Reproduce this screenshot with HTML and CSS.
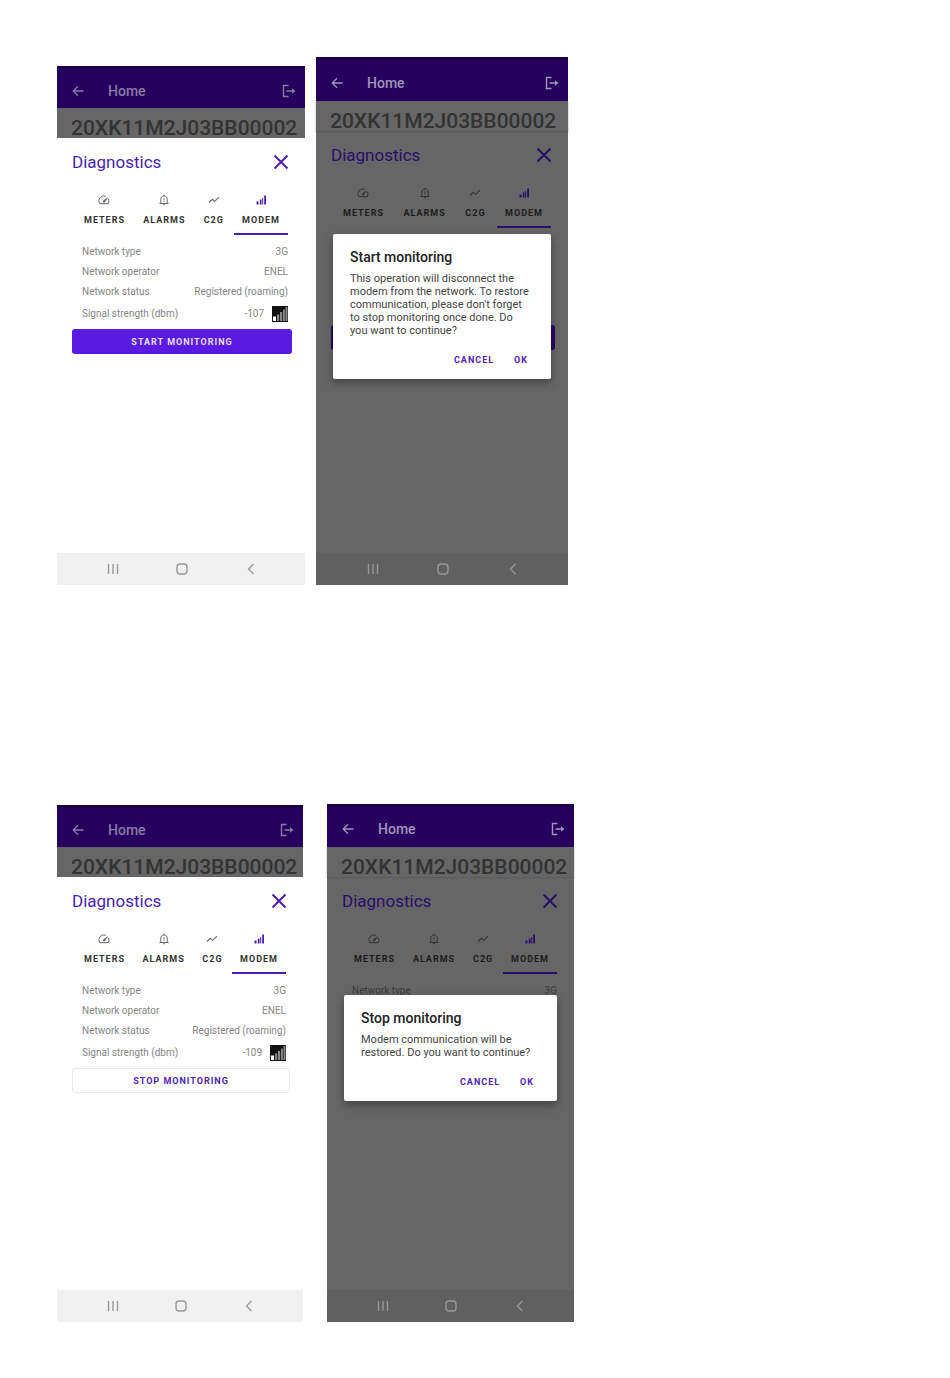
FILE: index.html
```html
<!DOCTYPE html>
<html lang="en">
<head>
<meta charset="utf-8">
<title>Modem diagnostics</title>
<link rel="stylesheet" href="styles.css">
</head>
<body>
<svg class="defs" aria-hidden="true">
  <symbol id="back" viewBox="0 0 12 12"><path d="M11.500 6H1.500M6 1.200L1.200 6L6 10.800" fill="none" stroke="currentColor" stroke-width="1.300"/></symbol>
  <symbol id="exit" viewBox="0 0 14 14"><path d="M6.500 1.500H1.500V12.500H6.500M4.500 7H12" fill="none" stroke="currentColor" stroke-width="1.4"/><path d="M10 4.200L13.500 7L10 9.800Z" fill="currentColor"/></symbol>
  <symbol id="close" viewBox="0 0 16 16"><path d="M1.500 1.500L14.500 14.500M14.500 1.500L1.500 14.500" fill="none" stroke="currentColor" stroke-width="2"/></symbol>
  <symbol id="gauge" viewBox="0 0 12 12"><path d="M7.800 2.300A5 5 0 0 0 1.700 9.700H10.300A5 5 0 0 0 10.400 4.800" fill="none" stroke="currentColor" stroke-width="1"/><path d="M10.300 2.700L7 8A1.100 1.100 0 0 1 5.200 6.500Z" fill="currentColor"/></symbol>
  <symbol id="bell" viewBox="0 0 12 12"><path d="M1.500 9.500H10.500M2.800 9.500V5.200C2.800 3.200 4 2 6 2S9.200 3.200 9.200 5.200V9.500M6 2V.7M6 4.200V6.500M6 7.300V8.200" fill="none" stroke="currentColor" stroke-width="1"/><path d="M4.900 10.300H7.100A1.100 1.100 0 0 1 4.900 10.300Z" fill="currentColor"/></symbol>
  <symbol id="trend" viewBox="0 0 12 12"><path d="M1 8.500L4.400 5.300L6.600 7.300L11 3.200" fill="none" stroke="currentColor" stroke-width="1.100"/></symbol>
  <symbol id="bars" viewBox="0 0 12 12"><path d="M1.500 7.500H3.500V10.500H1.500ZM4.800 5.500H6.500V10.500H4.800ZM7.200 4H8.200V10.500H7.200ZM9.200 1.500H11V10.500H9.200Z" fill="currentColor"/></symbol>
  <symbol id="signal" viewBox="0 0 16 16"><path d="M0 0H16V16H0Z" fill="#111"/><path d="M1 10.500H4V15H1Z" fill="#fff"/><path d="M5 8.500H7.200V15H5ZM8 6H10.200V15H8ZM11 3.500H12.900V15H11ZM13.500 1H15.500V15H13.500Z" fill="#888"/></symbol>
  <symbol id="recents" viewBox="0 0 14 14"><path d="M2.500 2V12M7 2V12M11.500 2V12" stroke="currentColor" stroke-width="1.400"/></symbol>
  <symbol id="homekey" viewBox="0 0 14 14"><rect x="2" y="2" width="10" height="10" rx="3" fill="none" stroke="currentColor" stroke-width="1.400"/></symbol>
  <symbol id="backkey" viewBox="0 0 14 14"><path d="M9.500 2L4.500 7L9.500 12" fill="none" stroke="currentColor" stroke-width="1.400"/></symbol>
</svg>
<main class="page">
  <div class="row">
    <section class="phone medium">
      <header class="appbar"><button class="icon-btn" aria-label="Back"><svg class="i12"><use href="#back"/></svg></button><span class="appbar-title">Home</span><button class="icon-btn" aria-label="Log out"><svg class="i14"><use href="#exit"/></svg></button></header>
      <div class="serial">20XK11M2J03BB00002</div>
      <div class="sheet">
        <div class="sheet-head"><h2>Diagnostics</h2><button class="icon-btn" aria-label="Close"><svg class="i16"><use href="#close"/></svg></button></div>
        <div class="tabs" role="tablist">
          <button class="tab" role="tab"><svg class="i12"><use href="#gauge"/></svg>METERS</button>
          <button class="tab" role="tab"><svg class="i12"><use href="#bell"/></svg>ALARMS</button>
          <button class="tab" role="tab"><svg class="i12"><use href="#trend"/></svg>C2G</button>
          <button class="tab active" role="tab" aria-selected="true"><svg class="i12"><use href="#bars"/></svg>MODEM</button>
        </div>
        <dl class="facts">
          <div><dt>Network type</dt><dd>3G</dd></div>
          <div><dt>Network operator</dt><dd>ENEL</dd></div>
          <div><dt>Network status</dt><dd>Registered (roaming)</dd></div>
          <div class="strength"><dt>Signal strength (dbm)</dt><dd>-107<svg class="i16"><use href="#signal"/></svg></dd></div>
        </dl>
        <button class="action">START MONITORING</button>
      </div>
      <nav class="keys"><button class="icon-btn" aria-label="Recents"><svg class="i14"><use href="#recents"/></svg></button><button class="icon-btn" aria-label="Home"><svg class="i14"><use href="#homekey"/></svg></button><button class="icon-btn" aria-label="Back"><svg class="i14"><use href="#backkey"/></svg></button></nav>
    </section>

    <section class="phone dimmed tall">
      <header class="appbar"><button class="icon-btn" aria-label="Back"><svg class="i12"><use href="#back"/></svg></button><span class="appbar-title">Home</span><button class="icon-btn" aria-label="Log out"><svg class="i14"><use href="#exit"/></svg></button></header>
      <div class="serial">20XK11M2J03BB00002</div>
      <div class="sheet">
        <div class="sheet-head"><h2>Diagnostics</h2><button class="icon-btn" aria-label="Close"><svg class="i16"><use href="#close"/></svg></button></div>
        <div class="tabs" role="tablist">
          <button class="tab" role="tab"><svg class="i12"><use href="#gauge"/></svg>METERS</button>
          <button class="tab" role="tab"><svg class="i12"><use href="#bell"/></svg>ALARMS</button>
          <button class="tab" role="tab"><svg class="i12"><use href="#trend"/></svg>C2G</button>
          <button class="tab active" role="tab" aria-selected="true"><svg class="i12"><use href="#bars"/></svg>MODEM</button>
        </div>
        <div class="facts covered"></div>
        <div class="action"></div>
      </div>
      <nav class="keys"><button class="icon-btn" aria-label="Recents"><svg class="i14"><use href="#recents"/></svg></button><button class="icon-btn" aria-label="Home"><svg class="i14"><use href="#homekey"/></svg></button><button class="icon-btn" aria-label="Back"><svg class="i14"><use href="#backkey"/></svg></button></nav>
      <div class="overlay">
        <div class="dialog" role="dialog" aria-labelledby="start-title">
          <h3 id="start-title">Start monitoring</h3>
          <p>This operation will disconnect the modem from the network. To restore communication, please don't forget to stop monitoring once done. Do you want to continue?</p>
          <div class="choices"><button>CANCEL</button><button>OK</button></div>
        </div>
      </div>
    </section>
  </div>

  <div class="row spaced">
    <section class="phone small">
      <header class="appbar"><button class="icon-btn" aria-label="Back"><svg class="i12"><use href="#back"/></svg></button><span class="appbar-title">Home</span><button class="icon-btn" aria-label="Log out"><svg class="i14"><use href="#exit"/></svg></button></header>
      <div class="serial">20XK11M2J03BB00002</div>
      <div class="sheet">
        <div class="sheet-head"><h2>Diagnostics</h2><button class="icon-btn" aria-label="Close"><svg class="i16"><use href="#close"/></svg></button></div>
        <div class="tabs" role="tablist">
          <button class="tab" role="tab"><svg class="i12"><use href="#gauge"/></svg>METERS</button>
          <button class="tab" role="tab"><svg class="i12"><use href="#bell"/></svg>ALARMS</button>
          <button class="tab" role="tab"><svg class="i12"><use href="#trend"/></svg>C2G</button>
          <button class="tab active" role="tab" aria-selected="true"><svg class="i12"><use href="#bars"/></svg>MODEM</button>
        </div>
        <dl class="facts">
          <div><dt>Network type</dt><dd>3G</dd></div>
          <div><dt>Network operator</dt><dd>ENEL</dd></div>
          <div><dt>Network status</dt><dd>Registered (roaming)</dd></div>
          <div class="strength"><dt>Signal strength (dbm)</dt><dd>-109<svg class="i16"><use href="#signal"/></svg></dd></div>
        </dl>
        <button class="action outlined">STOP MONITORING</button>
      </div>
      <nav class="keys"><button class="icon-btn" aria-label="Recents"><svg class="i14"><use href="#recents"/></svg></button><button class="icon-btn" aria-label="Home"><svg class="i14"><use href="#homekey"/></svg></button><button class="icon-btn" aria-label="Back"><svg class="i14"><use href="#backkey"/></svg></button></nav>
    </section>

    <section class="phone dimmed">
      <header class="appbar"><button class="icon-btn" aria-label="Back"><svg class="i12"><use href="#back"/></svg></button><span class="appbar-title">Home</span><button class="icon-btn" aria-label="Log out"><svg class="i14"><use href="#exit"/></svg></button></header>
      <div class="serial">20XK11M2J03BB00002</div>
      <div class="sheet">
        <div class="sheet-head"><h2>Diagnostics</h2><button class="icon-btn" aria-label="Close"><svg class="i16"><use href="#close"/></svg></button></div>
        <div class="tabs" role="tablist">
          <button class="tab" role="tab"><svg class="i12"><use href="#gauge"/></svg>METERS</button>
          <button class="tab" role="tab"><svg class="i12"><use href="#bell"/></svg>ALARMS</button>
          <button class="tab" role="tab"><svg class="i12"><use href="#trend"/></svg>C2G</button>
          <button class="tab active" role="tab" aria-selected="true"><svg class="i12"><use href="#bars"/></svg>MODEM</button>
        </div>
        <dl class="facts">
          <div><dt>Network type</dt><dd>3G</dd></div>
        </dl>
      </div>
      <nav class="keys"><button class="icon-btn" aria-label="Recents"><svg class="i14"><use href="#recents"/></svg></button><button class="icon-btn" aria-label="Home"><svg class="i14"><use href="#homekey"/></svg></button><button class="icon-btn" aria-label="Back"><svg class="i14"><use href="#backkey"/></svg></button></nav>
      <div class="overlay">
        <div class="dialog" role="dialog" aria-labelledby="stop-title">
          <h3 id="stop-title">Stop monitoring</h3>
          <p>Modem communication will be restored. Do you want to continue?</p>
          <div class="choices"><button>CANCEL</button><button>OK</button></div>
        </div>
      </div>
    </section>
  </div>
</main>
</body>
</html>
```

FILE: styles.css
```css
* { box-sizing: border-box; }
body { margin: 0; background: #fff; font-family: Roboto, "Liberation Sans", sans-serif; }
button { font: inherit; letter-spacing: inherit; color: inherit; background: none; border: 0; padding: 0; cursor: pointer; }
h2, h3, p, dl, dd { margin: 0; }
svg { display: block; flex: none; }
.defs { position: absolute; width: 0; height: 0; }
.i12 { width: 12px; height: 12px; }
.i14 { width: 14px; height: 14px; }
.i16 { width: 16px; height: 16px; }

.page { display: flex; flex-direction: column; gap: 219px; padding: 57px; }
.row { display: flex; align-items: flex-end; gap: 11px; }
.row.spaced { gap: 24px; }

.phone {
  --sheet: #fff;
  --accent: #4a1fb0;
  --label: #333;
  --icon: #666;
  --text: #858585;
  --serial: #333;
  --fill: #5a1be0;
  --nav: #f1f1f1;
  --key: #999;
  --bar-text: #8a7aa6;
  --bar-height: 43px;
  position: relative;
  display: flex;
  flex-direction: column;
  flex: 0 1 247px;
  min-height: 518px;
  background: var(--sheet);
}
.phone.dimmed {
  --sheet: #666;
  --accent: #280f6c;
  --label: #1c1c1c;
  --icon: #333;
  --text: #3a3a3a;
  --fill: #25085f;
  --nav: #606060;
  --key: #989898;
  --bar-text: #a195b5;
}
.phone.small { --bar-height: 42px; flex-basis: 246px; min-height: 517px; }
.phone.medium { --bar-height: 42px; flex-basis: 248px; min-height: 519px; }
.phone.tall { --bar-height: 44px; flex-basis: 252px; min-height: 528px; }

.appbar {
  display: flex;
  align-items: center;
  height: var(--bar-height);
  padding: 4px 9px 0 15px;
  border-top: 3px solid #1b0047;
  background: #26005e;
  color: var(--bar-text);
}
.appbar-title { flex: 1; padding-left: 24px; font-size: 14px; line-height: 18px; font-weight: 500; }

.serial {
  height: 30px;
  padding: 10px 0 0 14px;
  background: #666;
  color: var(--serial);
  font-size: 21px;
  line-height: 20px;
  font-weight: 500;
  white-space: nowrap;
}
.dimmed .serial { box-shadow: 0 1px 1px #5c5c5c; }

.sheet { flex: 1; padding: 12px 13px 0 15px; }
.sheet-head { display: flex; justify-content: space-between; align-items: center; padding-right: 3px; color: var(--accent); }
.sheet-head h2 { font-size: 17px; line-height: 24px; font-weight: 400; }

.tabs { display: flex; justify-content: space-between; padding: 20px 4px 0; }
.tab {
  display: flex;
  flex-direction: column;
  align-items: center;
  gap: 8px;
  padding: 0 8px 7px;
  border-bottom: 2px solid transparent;
  color: var(--label);
  font-size: 9px;
  line-height: 12px;
  font-weight: 700;
  letter-spacing: 1px;
}
.tab svg { color: var(--icon); }
.tab.active { border-color: var(--accent); }
.tab.active svg { color: var(--accent); }

.facts { padding: 7px 4px 0 10px; color: var(--text); font-size: 10px; line-height: 20px; }
.facts > div { display: flex; justify-content: space-between; }
.facts dd { display: flex; align-items: center; gap: 8px; }
.facts .strength { line-height: 24px; }
.facts.covered { height: 94px; }

.action {
  display: block;
  width: 100%;
  height: 25px;
  margin-top: 3px;
  border-radius: 3px;
  background: var(--fill);
  color: #e6dcfa;
  font-size: 9px;
  font-weight: 700;
  letter-spacing: 1px;
}
.action.outlined { border: 1px solid #eaeaea; background: #fff; color: #5424b4; }

.keys {
  display: flex;
  justify-content: space-around;
  align-items: center;
  height: 32px;
  padding: 0 20px 0 22px;
  background: var(--nav);
  color: var(--key);
}

.overlay { position: absolute; inset: 0 0 32px; display: flex; align-items: center; padding: 2px 17px 0; }
.dialog {
  width: 100%;
  padding: 15px 18px 12px 17px;
  border-radius: 2px;
  background: #fff;
  box-shadow: 0 4px 10px rgba(0, 0, 0, .35);
}
.dialog h3 { color: #222; font-size: 14px; line-height: 16px; font-weight: 500; }
.phone .dialog p { margin-right: -5px; padding: 7px 5px 0 0; color: #444; font-size: 11px; line-height: 13px; }
.choices {
  display: flex;
  justify-content: flex-end;
  gap: 20px;
  padding: 16px 5px 0 0;
  color: #5424b4;
  font-size: 9px;
  line-height: 14px;
  font-weight: 700;
  letter-spacing: 1px;
}
```
